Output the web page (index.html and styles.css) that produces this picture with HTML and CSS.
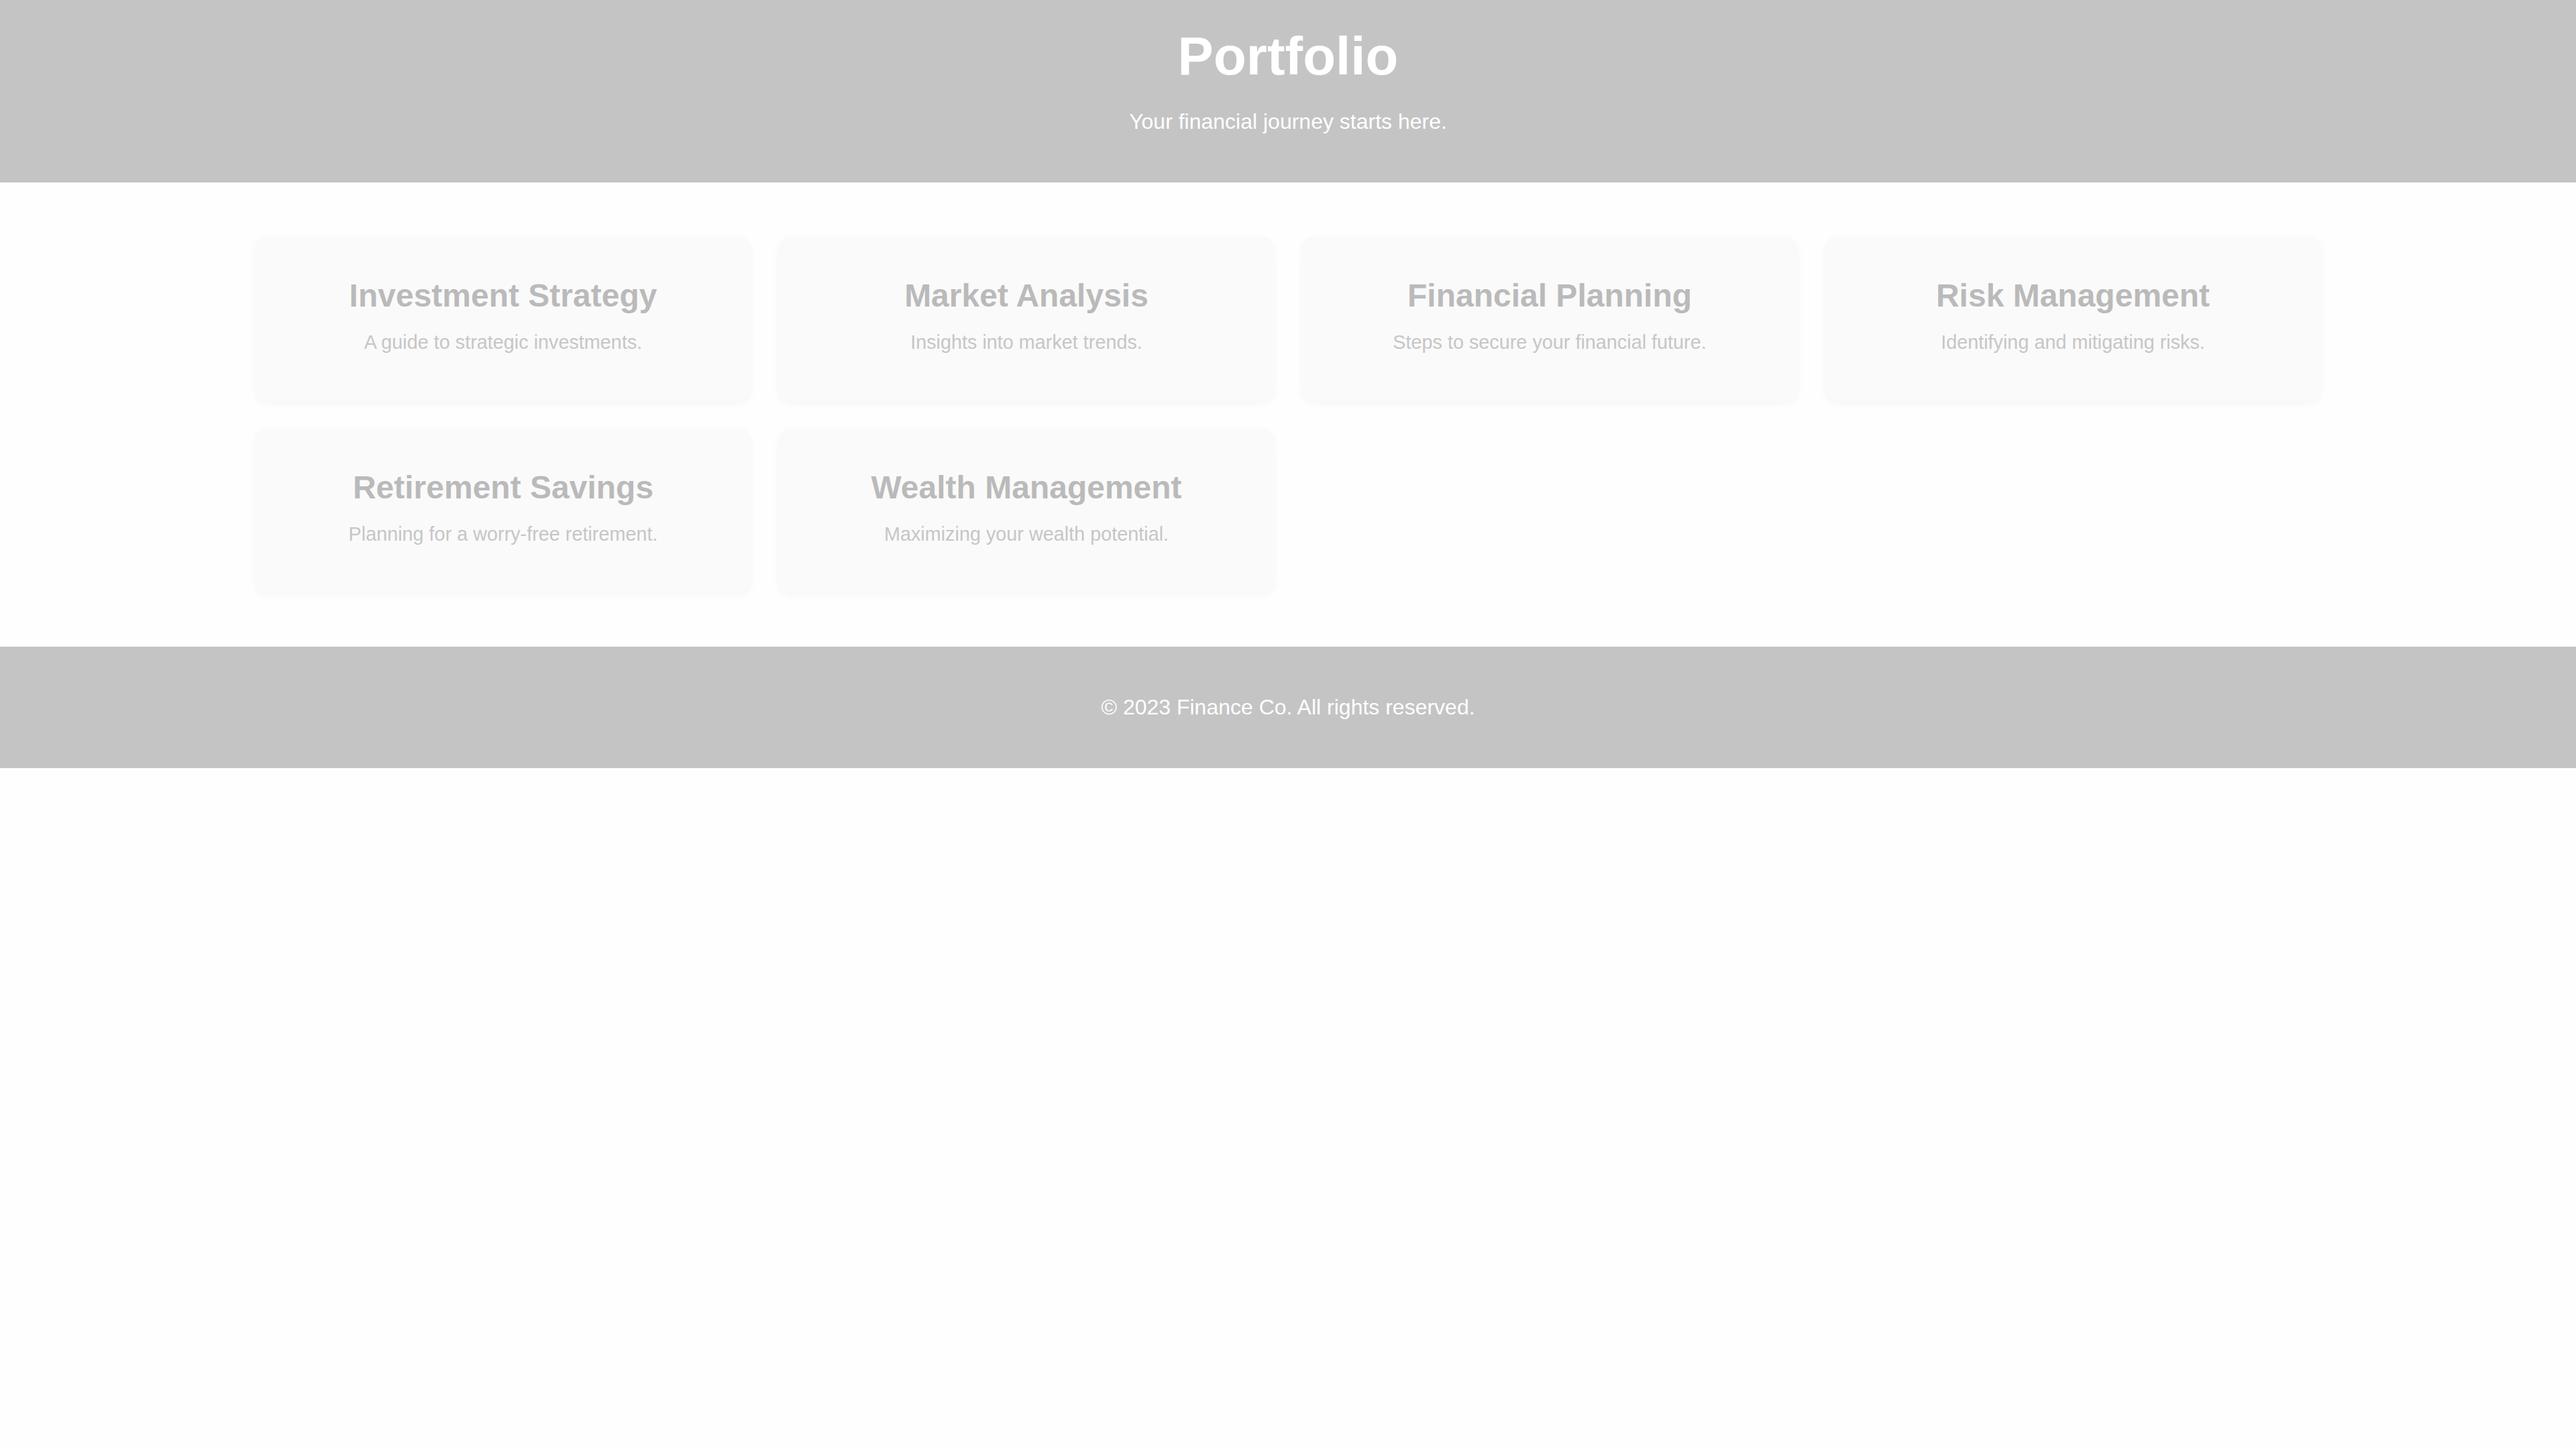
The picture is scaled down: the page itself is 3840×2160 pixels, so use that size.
FILE: index.html
```html
<!DOCTYPE html>
<html lang="en">
<head>
<meta charset="utf-8">
<title>Portfolio</title>
<link rel="stylesheet" href="styles.css">
</head>
<body>
<header class="site-header">
  <h1 class="site-title">Portfolio</h1>
  <p class="site-tagline">Your financial journey starts here.</p>
</header>
<main class="content">
  <section class="card-grid">
    <article class="card">
      <h3 class="card-title">Investment Strategy</h3>
      <p class="card-text">A guide to strategic investments.</p>
    </article>
    <article class="card">
      <h3 class="card-title">Market Analysis</h3>
      <p class="card-text">Insights into market trends.</p>
    </article>
    <article class="card">
      <h3 class="card-title">Financial Planning</h3>
      <p class="card-text">Steps to secure your financial future.</p>
    </article>
    <article class="card">
      <h3 class="card-title">Risk Management</h3>
      <p class="card-text">Identifying and mitigating risks.</p>
    </article>
    <article class="card">
      <h3 class="card-title">Retirement Savings</h3>
      <p class="card-text">Planning for a worry-free retirement.</p>
    </article>
    <article class="card">
      <h3 class="card-title">Wealth Management</h3>
      <p class="card-text">Maximizing your wealth potential.</p>
    </article>
  </section>
</main>
<footer class="site-footer">
  <p class="footer-text">© 2023 Finance Co. All rights reserved.</p>
</footer>
</body>
</html>
```

FILE: styles.css
```css
html, body {
  margin: 0;
  padding: 0;
}
body {
  background: #fefefe;
  font-family: "Liberation Sans", Arial, sans-serif;
  font-size: 32px;
  color: #333;
}
.site-header {
  background: #c4c4c4;
  color: #ffffff;
  text-align: center;
  padding: 38px 20px 71px;
  height: 163px;
}
.site-title {
  margin: 0 0 33px;
  font-size: 80px;
  font-weight: bold;
  line-height: 92px;
}
.site-tagline {
  margin: 0;
  font-size: 32px;
  line-height: 37px;
}
.content {
  padding: 80px 380px 80px;
}
.card-grid {
  display: grid;
  grid-template-columns: repeat(4, 1fr);
  gap: 40px;
}
.card {
  background: #fafafa;
  border-radius: 20px;
  box-shadow: 0 4px 12px rgba(0, 0, 0, 0.035);
  text-align: center;
  padding: 61px 40px 0;
  height: 185px;
}
.card-title {
  margin: 0 0 25px;
  font-size: 48px;
  font-weight: bold;
  line-height: 56px;
  color: #bababa;
}
.card-text {
  margin: 0;
  font-size: 28.8px;
  line-height: 33px;
  color: #c6c6c6;
}
.site-footer {
  background: #c4c4c4;
  color: #ffffff;
  text-align: center;
  height: 181px;
  display: flex;
  align-items: center;
  justify-content: center;
}
.footer-text {
  margin: 0;
  font-size: 32px;
  line-height: 37px;
}
```
